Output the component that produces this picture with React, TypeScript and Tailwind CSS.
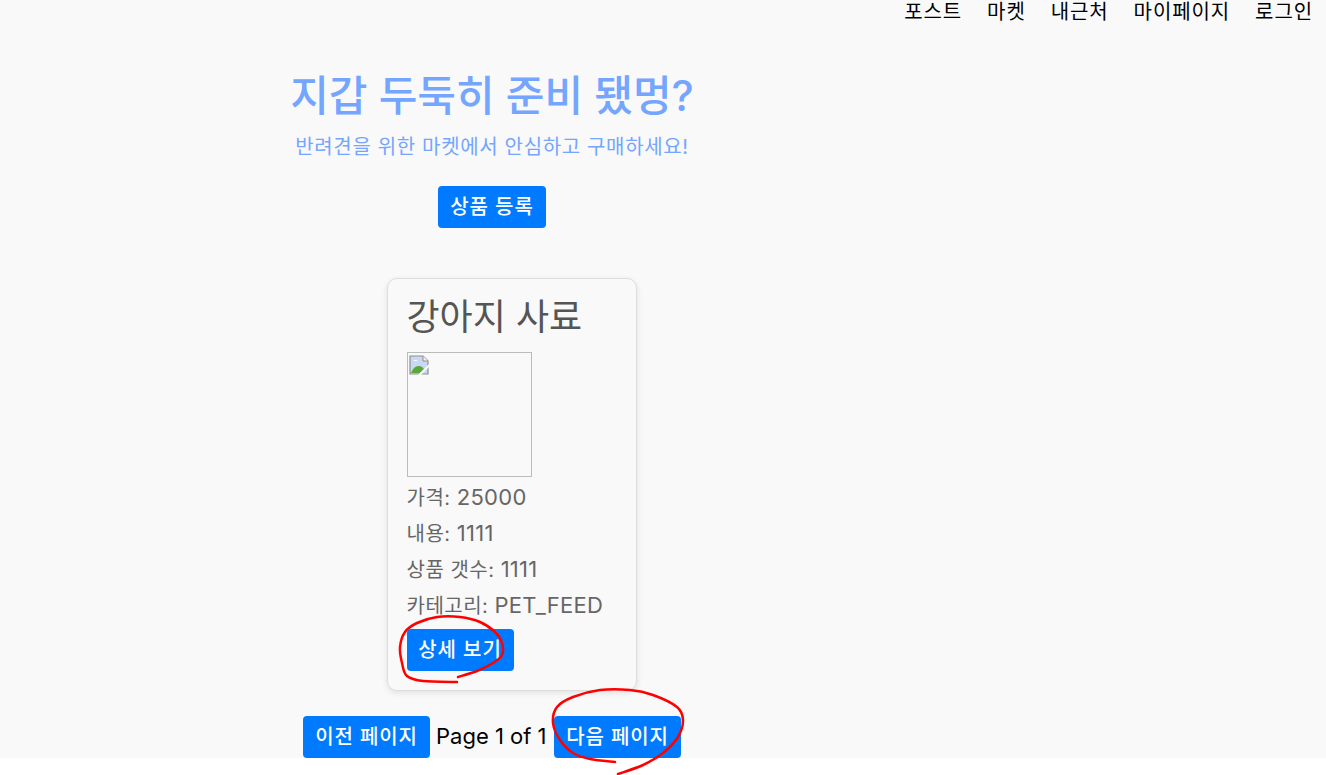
const font = { fontFamily: '"Inter", "Noto Sans CJK KR", sans-serif' }

const smooth = (p: number[][]) => {
  let d = `M${p[0][0]} ${p[0][1]}`
  for (let i = 0; i < p.length - 1; i++) {
    const a = p[Math.max(i - 1, 0)], b = p[i], c = p[i + 1], e = p[Math.min(i + 2, p.length - 1)]
    d += ` C${b[0] + (c[0] - a[0]) / 6} ${b[1] + (c[1] - a[1]) / 6} ${c[0] - (e[0] - b[0]) / 6} ${c[1] - (e[1] - b[1]) / 6} ${c[0]} ${c[1]}`
  }
  return d
}

const circleA = [[458, 677], [477, 671], [493, 663], [502, 655], [502, 643], [495, 632], [480, 622], [460, 617], [437, 617], [417, 623], [405, 632], [400, 647], [402, 663], [407, 676], [423, 681], [457, 682]]
const circleB = [[615, 762], [590, 759], [573, 753], [560, 740], [553, 723], [557, 707], [573, 697], [600, 690], [630, 690], [653, 695], [677, 707], [683, 720], [678, 737], [663, 753], [643, 765], [618, 774]]

const Btn = ({ children, cls }: any) => (
  <button className={`bg-[#007bff] text-white text-[20px] leading-[26px] tracking-[0.9px] py-2 rounded-[4px] font-medium text-center shrink-0 ${cls || ''}`}>
    {children}
  </button>
)

const BrokenImage = () => (
  <svg width="20" height="20" viewBox="0 0 20 20" className="absolute left-[1px] top-[2px]">
    <path d="M1 1 H14 L19 6 V19 H1 Z" fill="#c8d8f5" stroke="#8f8f8f" strokeWidth="1.2" />
    <path d="M14 1 V6 H19" fill="#f4f4f4" stroke="#8f8f8f" strokeWidth="1" />
    <path d="M4 6 Q6 4 9 6 H4 Z" fill="#ffffff" />
    <path d="M2 18 Q5 10 11 11 Q14 12 15 14 L11 18 Z" fill="#5aa83a" />
    <path d="M9 20 L20 9 V12 L12 20 Z" fill="#f9f9f9" />
  </svg>
)

const Num = ({ children }: any) => <span className="text-[22px] leading-none tracking-[0.3px]">{children}</span>

export default function App() {
  return (
    <div className="relative h-[775px] overflow-hidden bg-white" style={font}>
      <div className="h-[758px] bg-[#f9f9f9]">
        <nav className="flex justify-end gap-[25px] pt-[1px] pr-[13px] text-[20px] leading-[23px] tracking-[0.9px] text-black">
          <a>포스트</a>
          <a>마켓</a>
          <a>내근처</a>
          <a>마이페이지</a>
          <a>로그인</a>
        </nav>
        <div className="w-[984px] flex flex-col items-center pt-[45px]">
          <h1 className="text-[42px] leading-[54px] text-[#74a5ff] font-medium">지갑 두둑히 준비 됐멍?</h1>
          <p className="text-[20px] leading-[28px] mt-[10px] tracking-[0.65px] text-[#74a5ff]">반려견을 위한 마켓에서 안심하고 구매하세요!</p>
          <Btn cls="mt-[25px] w-[108px]">상품 등록</Btn>
          <div className="mt-[50px] ml-[39px] w-[250px] h-[413px] bg-[#f9f9f9] border border-[#dddddd] rounded-[10px] shadow-[0_2px_6px_rgba(0,0,0,0.1)] p-[19px] flex flex-col items-start">
            <h2 className="text-[36px] leading-[38px] text-[#555555]">강아지 사료</h2>
            <div className="relative mt-[16px] w-[125px] h-[125px] shrink-0 border border-[#bbbbbb]">
              <BrokenImage />
            </div>
            <div className="text-[20px] leading-[36px] tracking-[0.5px] text-[#666666] mt-[3px]">
              <p>가격: <Num>25000</Num></p>
              <p>내용: <Num>1111</Num></p>
              <p>상품 갯수: <Num>1111</Num></p>
              <p>카테고리: <Num>PET_FEED</Num></p>
            </div>
            <Btn cls="mt-[5px] w-[107px]">상세 보기</Btn>
          </div>
          <div className="flex items-center gap-[6px] mt-[25px] text-[22px] text-black">
            <Btn cls="w-[127px]">이전 페이지</Btn>
            <span className="w-[112px] whitespace-nowrap pb-[2px]">Page 1 of 1</span>
            <Btn cls="w-[127px]">다음 페이지</Btn>
          </div>
        </div>
      </div>
      <svg width="1326" height="775" className="absolute left-0 top-0 pointer-events-none" fill="none" stroke="#ff0000" strokeWidth="2.5" strokeLinecap="round">
        <path d={smooth(circleA)} />
        <path d={smooth(circleB)} />
      </svg>
    </div>
  )
}
